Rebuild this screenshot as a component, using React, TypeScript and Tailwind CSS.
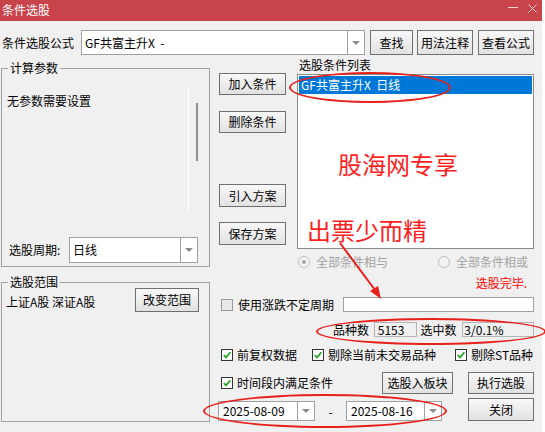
import type { ReactNode } from "react";
import clsx from "clsx";

const Btn = ({ children, className }: { children: ReactNode; className?: string }) => (
  <div
    className={clsx(
      "flex items-center justify-center border border-[#707070] bg-linear-to-b from-[#f8f8f8] to-[#e2e2e2] shrink-0",
      className
    )}
  >
    {children}
  </div>
);

const Arrow = () => (
  <div className="w-0 h-0 border-x-[4px] border-x-transparent border-t-[4px] border-t-[#8c8c8c]" />
);

const Combo = ({ value, className, pad = "pl-[3px]" }: { value: string; className?: string; pad?: string }) => (
  <div className={clsx("flex border border-[#a0a0a0] bg-white shrink-0", className)}>
    <div className={clsx("flex-1 flex items-center whitespace-pre", pad)}>{value}</div>
    <div className="w-[17px] border-l border-[#a0a0a0] flex items-center justify-center">
      <Arrow />
    </div>
  </div>
);

const Check = ({ checked = true }: { checked?: boolean }) => (
  <div
    className={clsx(
      "w-[12px] h-[12px] border flex items-center justify-center shrink-0",
      checked ? "border-[#333333] bg-white" : "border-[#9a9a9a] bg-[#e8e8e8]"
    )}
  >
    {checked && (
      <svg viewBox="0 0 10 10" className="w-[10px] h-[10px]">
        <path d="M1.8 5 L4 7.4 L8.4 2.2" stroke="#22a322" strokeWidth="1.7" fill="none" />
      </svg>
    )}
  </div>
);

const Radio = ({ on }: { on?: boolean }) => (
  <div className="w-[12px] h-[12px] rounded-full border border-[#bcbcbc] bg-[#f4f4f4] flex items-center justify-center shrink-0">
    {on && <div className="w-[4px] h-[4px] rounded-full bg-[#a8a8a8]" />}
  </div>
);

const Legend = ({ children }: { children: ReactNode }) => (
  <span className="absolute -top-[8px] left-[6px] px-[2px] bg-[#f0f0f0] leading-[14px]">{children}</span>
);

const Ellipse = ({ className }: { className: string }) => (
  <div className={clsx("absolute border-2 border-[#e8201c] rounded-[50%]", className)} />
);

export default function App() {
  return (
    <div className="relative w-[545px] h-[432px] overflow-hidden bg-white text-black text-[12px] leading-[14px] font-['Noto_Sans_CJK_SC',sans-serif]">
      <div className="w-[542px] h-[432px] bg-[#f0f0f0] flex flex-col">
        {/* title bar */}
        <div className="h-[21px] bg-[#c8434a] flex items-start pl-[2px] pr-[5px] text-white shrink-0">
          <span className="flex-1 mt-[3px]">条件选股</span>
          <span className="w-[10px] h-px bg-[#f3d2d4] mt-[7px]" />
          <svg viewBox="0 0 9 9" className="w-[9px] h-[9px] ml-[10px] mt-[4px]">
            <path d="M0.5 0.5 L8.5 8.5 M8.5 0.5 L0.5 8.5" stroke="#f3d2d4" strokeWidth="1" />
          </svg>
        </div>

        {/* formula row */}
        <div className="mt-[9px] h-[25px] flex items-center">
          <span className="ml-[2px] w-[79px]">条件选股公式</span>
          <Combo value="GF共富主升X  -" className="w-[284px] h-[25px]" />
          <Btn className="ml-[5px] w-[43px] h-[25px]">查找</Btn>
          <Btn className="ml-[4px] w-[56px] h-[25px]">用法注释</Btn>
          <Btn className="ml-[5px] w-[56px] h-[25px]">查看公式</Btn>
        </div>

        {/* main */}
        <div className="flex mt-[3px]">
          {/* left column */}
          <div className="ml-[1px] w-[209px] flex flex-col pt-[10px] shrink-0">
            <div className="relative h-[199px] border border-[#a0a0a0] flex flex-col">
              <Legend>计算参数</Legend>
              <div className="flex mt-[17px] h-[125px]">
                <div className="w-[186px] pl-[5px] pt-[8px]">无参数需要设置</div>
                <div className="w-px bg-white" />
                <div className="w-[7px]" />
                <div className="w-[2px] h-[58px] mt-[17px] bg-[#8e8e8e]" />
              </div>
              <div className="mt-auto mb-[3px] h-[26px] flex items-center">
                <span className="pl-[7px] w-[67px]">选股周期:</span>
                <Combo value="日线" className="w-[129px] h-[26px]" />
              </div>
            </div>

            <div className="relative mt-[15px] h-[140px] border border-[#a0a0a0]">
              <Legend>选股范围</Legend>
              <div className="flex items-start mt-[5px]">
                <span className="pl-[4px] mt-[7px]">上证A股 深证A股</span>
                <Btn className="ml-auto mr-[10px] w-[64px] h-[24px]">改变范围</Btn>
              </div>
            </div>
          </div>

          {/* right column */}
          <div className="ml-[9px] w-[315px] flex flex-col shrink-0">
            <div className="flex h-[191px]">
              <div className="w-[67px] flex flex-col">
                <Btn className="mt-[15px] h-[22px]">加入条件</Btn>
                <Btn className="mt-[16px] h-[22px]">删除条件</Btn>
                <Btn className="mt-[51px] h-[23px]">引入方案</Btn>
                <Btn className="mt-[15px] h-[23px]">保存方案</Btn>
              </div>
              <div className="ml-[11px] w-[237px] flex flex-col">
                <span className="pl-[2px] h-[14px]">选股条件列表</span>
                <div className="mt-[2px] h-[175px] border border-[#8c8c8c] bg-white p-px">
                  <div className="h-[18px] bg-[#0078d7] text-white flex items-center pl-[2px] whitespace-pre">
                    GF共富主升X  日线
                  </div>
                </div>
              </div>
            </div>

            <div className="mt-[6px] h-[14px] flex items-center pl-[79px] text-[#a3a3a3]">
              <div className="w-[140px] flex items-center gap-[6px]">
                <Radio on />
                <span>全部条件相与</span>
              </div>
              <div className="flex items-center gap-[6px]">
                <Radio />
                <span>全部条件相或</span>
              </div>
            </div>

            <div className="mt-[7px] h-[14px] flex justify-end pr-[7px] text-[#ff0000]">选股完毕.</div>

            <div className="mt-[7px] h-[15px] flex items-center pl-[2px]">
              <Check checked={false} />
              <span className="ml-[5px] w-[105px]">使用涨跌不定周期</span>
              <div className="w-[191px] h-[15px] border border-[#a0a0a0] bg-white" />
            </div>

            <div className="mt-[10px] h-[15px] flex items-center pl-[114px]">
              <span className="w-[41px]">品种数</span>
              <div className="w-[43px] h-[15px] border border-[#b4b4b4] bg-[#f0f0f0] pl-[3px] flex items-center">5153</div>
              <span className="ml-[4px] w-[42px]">选中数</span>
              <div className="w-[72px] h-[15px] border border-[#b4b4b4] bg-[#f0f0f0] pl-[1px] flex items-center">3/0.1%</div>
            </div>

            <div className="mt-[11px] h-[14px] flex items-center pl-[2px]">
              <div className="w-[91px] flex items-center gap-[4px]">
                <Check />
                <span>前复权数据</span>
              </div>
              <div className="w-[143px] flex items-center gap-[4px]">
                <Check />
                <span>剔除当前未交易品种</span>
              </div>
              <div className="flex items-center gap-[4px]">
                <Check />
                <span>剔除ST品种</span>
              </div>
            </div>

            <div className="mt-[10px] h-[22px] flex items-center pl-[2px]">
              <Check />
              <span className="ml-[4px] w-[145px]">时间段内满足条件</span>
              <Btn className="w-[71px] h-[22px]">选股入板块</Btn>
              <Btn className="ml-[15px] w-[66px] h-[22px]">执行选股</Btn>
            </div>

            <div className="mt-[4px] h-[23px] flex items-end -ml-[1px]">
              <Combo value="2025-08-09" pad="pl-[4px]" className="w-[97px] h-[20px]" />
              <span className="w-[33px] text-center mb-[2px]">-</span>
              <Combo value="2025-08-16" pad="pl-[4px]" className="w-[96px] h-[20px]" />
              <Btn className="ml-[26px] w-[66px] h-[23px] self-start">关闭</Btn>
            </div>
          </div>
        </div>
      </div>

      {/* red annotations */}
      <Ellipse className="left-[289px] top-[72px] w-[162px] h-[31px]" />
      <Ellipse className="left-[316px] top-[318px] w-[230px] h-[27px]" />
      <Ellipse className="left-[203px] top-[394px] w-[244px] h-[34px]" />
      <span className="absolute left-[338px] top-[149px] text-[24px] leading-[30px] text-[#ff1e1e]">股海网专享</span>
      <span className="absolute left-[307px] top-[215px] text-[24px] leading-[30px] text-[#ff1e1e]">出票少而精</span>
      <svg className="absolute left-0 top-0 pointer-events-none" width="545" height="432">
        <line x1="340" y1="243" x2="378" y2="294" stroke="#e8201c" strokeWidth="2" />
        <path d="M381 299 L370 291 L378 286 Z" fill="#e8201c" />
      </svg>
    </div>
  );
}
